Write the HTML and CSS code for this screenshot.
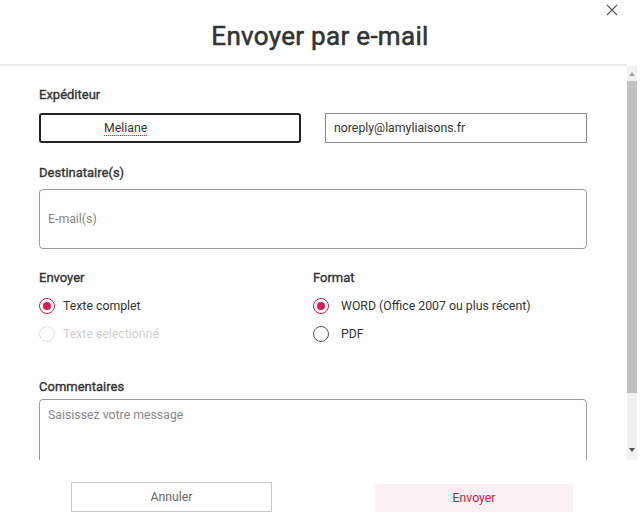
FILE: index.html
```html
<!DOCTYPE html>
<html lang="fr">
<head>
  <meta charset="UTF-8" />
  <meta name="viewport" content="width=device-width, initial-scale=1.0"/>
  <title>Envoyer par e-mail</title>
  <link rel="stylesheet" href="styles.css">
</head>
<body>

<div class="dialog">
  <!-- Title bar -->
  <header class="dialog-head">
    <h1>Envoyer par e-mail</h1>
    <button class="close-btn" aria-label="Fermer">
      <svg width="12" height="12" viewBox="0 0 12 12">
        <path d="M1 1 L11 11 M11 1 L1 11" stroke="#555" stroke-width="1.1" fill="none"/>
      </svg>
    </button>
  </header>

  <div class="dialog-body">
    <div class="scroll">
      <div class="label">Expéditeur</div>
      <div class="sender-row">
        <div class="field field-active"><span class="misspelt">Meliane</span></div>
        <div class="field field-plain">noreply@lamyliaisons.fr</div>
      </div>

      <div class="label label-gap">Destinataire(s)</div>
      <div class="box box-recipients"><span class="placeholder">E-mail(s)</span></div>

      <div class="options">
        <div class="option-col">
          <div class="label">Envoyer</div>
          <div class="radio-row checked"><span class="radio"></span>Texte complet</div>
          <div class="radio-row disabled"><span class="radio"></span>Texte selectionné</div>
        </div>
        <div class="option-col">
          <div class="label">Format</div>
          <div class="radio-row checked wide"><span class="radio"></span>WORD (Office 2007 ou plus récent)</div>
          <div class="radio-row wide"><span class="radio"></span>PDF</div>
        </div>
      </div>

      <div class="label label-comments">Commentaires</div>
      <div class="box box-comments"><span class="placeholder">Saisissez votre message</span></div>
    </div>

    <!-- Scrollbar of the form area -->
    <div class="scrollbar">
      <span class="arrow arrow-up"></span>
      <span class="thumb"></span>
      <span class="track-rest"></span>
      <span class="arrow arrow-down"></span>
    </div>
  </div>

  <footer class="dialog-foot">
    <button class="btn btn-cancel">Annuler</button>
    <button class="btn btn-send">Envoyer</button>
  </footer>
</div>

</body>
</html>
```

FILE: styles.css
```css
body {
  margin: 0;
  background: #fff;
  font-family: Roboto, 'Liberation Sans', sans-serif;
  color: #333;
}

.dialog {
  width: 640px;
  height: 527px;
  display: flex;
  flex-direction: column;
  overflow: hidden;
}

/* Header */
.dialog-head {
  position: relative;
  height: 66px;
  margin-right: 13px;
  border-bottom: 2px solid #ebebeb;
  box-sizing: border-box;
  display: flex;
  align-items: center;
  justify-content: center;
}

.dialog-head h1 {
  margin: 0;
  padding-top: 7px;
  padding-left: 13px;
  font-size: 26px;
  font-weight: 400;
  -webkit-text-stroke: 0.55px #333;
  color: #333;
  letter-spacing: 0.3px;
}

.close-btn {
  position: absolute;
  top: 4px;
  right: 8px;
  width: 14px;
  height: 14px;
  padding: 0;
  border: none;
  background: none;
  cursor: pointer;
}

/* Body with its scrollbar */
.dialog-body {
  height: 394px;
  display: flex;
  padding-right: 3px;
}

.scroll {
  flex: 1;
  overflow: hidden;
  padding: 21px 40px 0 39px;
}

.scrollbar {
  width: 10px;
  background: #f1f1f1;
  display: flex;
  flex-direction: column;
  align-items: center;
}

.arrow {
  width: 0;
  height: 0;
  border-left: 3px solid transparent;
  border-right: 3px solid transparent;
}

.arrow-up {
  margin-top: 6px;
  border-bottom: 4px solid #a3a3a3;
}

.arrow-down {
  margin-bottom: 8px;
  border-top: 4px solid #505050;
}

.thumb {
  margin-top: 5px;
  width: 10px;
  height: 312px;
  background: #c1c1c1;
}

.track-rest {
  flex: 1;
}

/* Form */
.label {
  font-size: 13px;
  font-weight: 400;
  -webkit-text-stroke: 0.35px #333;
  line-height: 16px;
  color: #333;
}

.label-gap {
  margin-top: 22px;
}

.sender-row {
  display: flex;
  gap: 24px;
  margin-top: 10px;
}

.field {
  width: 262px;
  height: 30px;
  box-sizing: border-box;
  font-size: 12.3px;
  display: flex;
  align-items: center;
  color: #333;
}

.field-active {
  border: 2px solid #222;
  border-radius: 3px;
  padding-left: 63px;
}

.field-plain {
  border: 1px solid #8a8a8a;
  padding-left: 8px;
}

.misspelt {
  text-decoration: underline dotted #f0303c;
  text-decoration-thickness: 1px;
  text-underline-offset: 3px;
}

.box {
  border: 1px solid #999;
  border-radius: 4px;
  box-sizing: border-box;
  font-size: 12.3px;
  padding-left: 8px;
}

.placeholder {
  color: #888;
}

.box-recipients {
  margin-top: 8px;
  height: 60px;
  display: flex;
  align-items: center;
}

.options {
  display: flex;
  margin-top: 21px;
}

.option-col {
  width: 274px;
}

.option-col .label {
  margin-bottom: 6px;
}

.radio-row {
  height: 28px;
  display: flex;
  align-items: center;
  gap: 8px;
  font-size: 12.3px;
  color: #333;
}

.radio-row.wide {
  gap: 12px;
}

.radio {
  width: 16px;
  height: 16px;
  box-sizing: border-box;
  border: 1px solid #555;
  border-radius: 50%;
  position: relative;
}

.radio-row.checked .radio {
  border: 1.5px solid #c8184a;
}

.radio-row.checked .radio::after {
  content: '';
  position: absolute;
  top: 2.5px;
  left: 2.5px;
  width: 8px;
  height: 8px;
  border-radius: 50%;
  background: #d81b52;
}

.radio-row.disabled {
  color: #cfcfcf;
}

.radio-row.disabled .radio {
  border-color: #dcdcdc;
}

.label-comments {
  margin-top: 31px;
}

.box-comments {
  margin-top: 4px;
  height: 90px;
  padding-top: 8px;
}

/* Footer buttons */
.dialog-foot {
  flex: 1;
  display: flex;
  align-items: flex-start;
  padding: 22px 0 0 71px;
  gap: 103px;
}

.btn {
  font-family: Roboto, 'Liberation Sans', sans-serif;
  font-size: 12.3px;
  cursor: pointer;
}

.btn-cancel {
  width: 201px;
  height: 30px;
  background: #fff;
  border: 1px solid #c8c8c8;
  color: #666;
}

.btn-send {
  width: 198px;
  height: 28px;
  margin-top: 2px;
  background: #fbf0f3;
  border: none;
  color: #c8184a;
}
```
